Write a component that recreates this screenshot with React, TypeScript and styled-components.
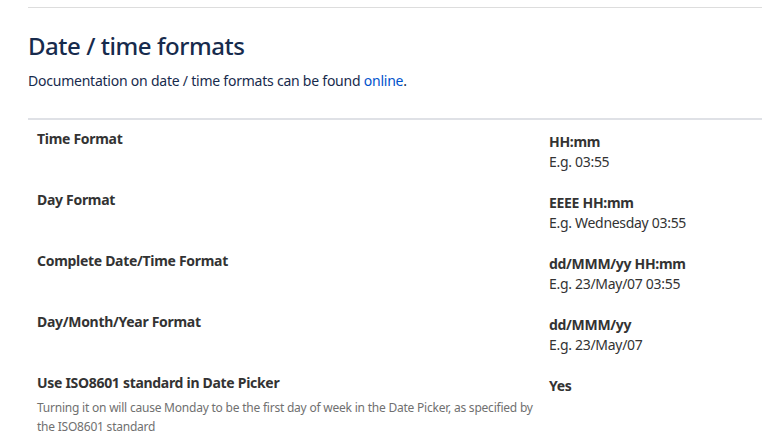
import React from "react";
import styled, { createGlobalStyle } from "styled-components";

const Global = createGlobalStyle`
  html, body { margin: 0; padding: 0; background: #fff; }
  body { font-family: "Noto Sans", "Open Sans", sans-serif; overflow: hidden; }
`;

const Page = styled.div`
  padding: 7px 0 0 28px;
`;

const TopRule = styled.div`
  height: 1px;
  background: #dddddd;
`;

const Heading = styled.h2`
  margin: 22px 0 0;
  font-size: 24px;
  line-height: 32px;
  font-weight: 500;
  letter-spacing: -0.45px;
  color: #172b4d;
`;

const Intro = styled.p`
  margin: 9px 0 0;
  font-size: 14px;
  line-height: 20px;
  letter-spacing: -0.23px;
  color: #172b4d;
`;

const Link = styled.a`
  color: #0052cc;
  text-decoration: none;
`;

const Table = styled.div`
  margin-top: 27px;
  border-top: 2px solid #dfe1e6;
  display: grid;
  grid-template-columns: 512px 1fr;
`;

const LabelCell = styled.div`
  padding: 9px 0 0 9px;
  color: #333;
`;

const Label = styled.div`
  font-size: 14px;
  line-height: 20px;
  font-weight: 700;
  letter-spacing: -0.3px;
`;

const Description = styled.div`
  margin-top: 5px;
  font-size: 12px;
  line-height: 19px;
  letter-spacing: -0.22px;
  color: #707070;
`;

const ValueCell = styled.div`
  padding: 12px 9px 9px;
  color: #333;
  font-size: 14px;
  line-height: 20px;
  letter-spacing: -0.3px;
`;

const Value = styled.div`
  font-weight: 700;
`;

const Example = styled.div``;

const rows = [
  { label: "Time Format", value: "HH:mm", example: "E.g. 03:55" },
  { label: "Day Format", value: "EEEE HH:mm", example: "E.g. Wednesday 03:55" },
  { label: "Complete Date/Time Format", value: "dd/MMM/yy HH:mm", example: "E.g. 23/May/07 03:55" },
  { label: "Day/Month/Year Format", value: "dd/MMM/yy", example: "E.g. 23/May/07" },
];

export default function App() {
  return (
    <>
      <Global />
      <Page>
        <TopRule />
        <Heading>Date / time formats</Heading>
        <Intro>
          Documentation on date / time formats can be found <Link href="#">online</Link>.
        </Intro>
        <Table>
          {rows.map((r) => (
            <React.Fragment key={r.label}>
              <LabelCell>
                <Label>{r.label}</Label>
              </LabelCell>
              <ValueCell>
                <Value>{r.value}</Value>
                <Example>{r.example}</Example>
              </ValueCell>
            </React.Fragment>
          ))}
          <LabelCell>
            <Label>Use ISO8601 standard in Date Picker</Label>
            <Description>
              Turning it on will cause Monday to be the first day of week in the Date Picker, as specified by
              the ISO8601 standard
            </Description>
          </LabelCell>
          <ValueCell>
            <Value>Yes</Value>
          </ValueCell>
        </Table>
      </Page>
    </>
  );
}
